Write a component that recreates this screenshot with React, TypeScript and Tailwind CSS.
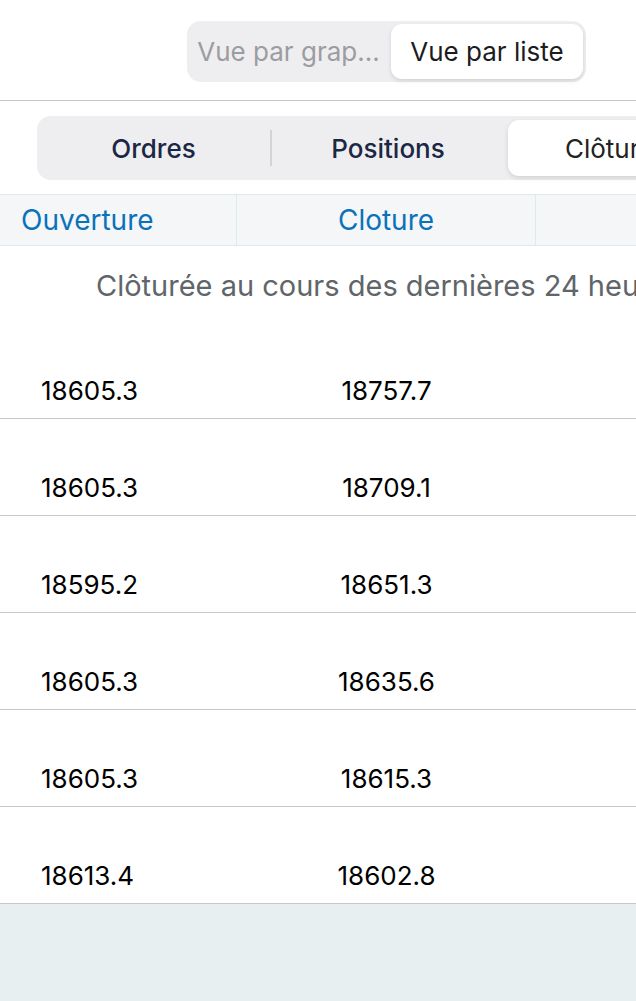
const rows = [
  ["18605.3", "18757.7"],
  ["18605.3", "18709.1"],
  ["18595.2", "18651.3"],
  ["18605.3", "18635.6"],
  ["18605.3", "18615.3"],
  ["18613.4", "18602.8"],
];

export default function App() {
  return (
    <div
      className="w-[636px] h-[1001px] overflow-hidden bg-white flex flex-col"
      style={{ fontFamily: "Inter, 'Noto Sans', sans-serif" }}
    >
      {/* view switch */}
      <div className="h-[100px] shrink-0 flex justify-end pr-[50px] pt-[21px]">
        <div className="w-[399px] h-[61px] bg-[#eeeef0] rounded-[14px] p-[3px] flex">
          <div className="flex-1 flex items-center justify-center text-[26px] text-[#9c9ca1] whitespace-nowrap pr-[4px]">
            Vue par grap...
          </div>
          <div className="w-[192px] bg-white rounded-[11px] shadow-[0_2px_4px_rgba(0,0,0,0.12)] flex items-center justify-center text-[26px] text-[#1c1c1e] whitespace-nowrap">
            Vue par liste
          </div>
        </div>
      </div>
      <div className="h-px bg-[#c6c6c8] shrink-0" />

      {/* tabs */}
      <div className="pt-[15px] pl-[37px] shrink-0">
        <div className="w-[760px] h-[64px] bg-[#eeeef0] rounded-[14px] py-[4px] flex items-stretch">
          <div className="w-[233px] flex items-center justify-center text-[26px] font-medium text-[#1b2744]">
            Ordres
          </div>
          <div className="w-[2px] my-[10px] bg-[#d4d4d8]" />
          <div className="w-[232px] flex items-center justify-center text-[26px] font-medium text-[#1b2744]">
            Positions
          </div>
          <div className="ml-[4px] w-[232px] bg-white rounded-[11px] shadow-[0_2px_5px_rgba(0,0,0,0.12)] flex items-center justify-center text-[26px] text-[#222]">
            Clôturées
          </div>
        </div>
      </div>

      {/* table header */}
      <div className="mt-[14px] h-[52px] shrink-0 flex w-[900px] bg-[#f4f6f8] border-y border-[#dce9ed] text-[28px] text-[#0b72b9]">
        <div className="w-[237px] shrink-0 border-r border-[#dce9ed] flex items-center pl-[21px]">
          Ouverture
        </div>
        <div className="w-[299px] shrink-0 border-r border-[#dce9ed] flex items-center justify-center">
          Cloture
        </div>
        <div className="w-[300px] shrink-0" />
      </div>

      {/* message */}
      <div className="h-[76px] shrink-0 pl-[96px] pt-[23px] text-[29px] leading-[34px] text-[#606569] whitespace-nowrap">
        Clôturée au cours des dernières 24 heures
      </div>

      {/* rows */}
      {rows.map(([open, close], i) => (
        <div
          key={i}
          className="h-[97px] shrink-0 flex items-end pb-[12px] border-b border-[#c8c8c8] text-[26px] leading-[30px] text-black"
        >
          <div className="w-[237px] shrink-0 pl-[41px]">{open}</div>
          <div className="w-[299px] shrink-0 text-center">{close}</div>
        </div>
      ))}

      <div className="flex-1 bg-[#e8eff1]" />
    </div>
  );
}
